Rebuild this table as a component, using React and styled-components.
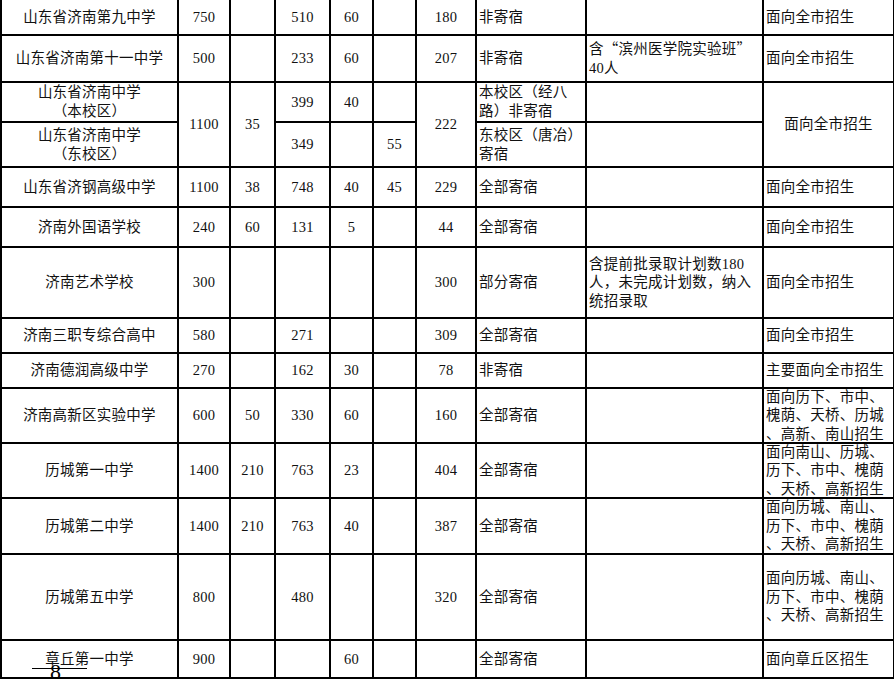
import React from 'react';
import styled, { createGlobalStyle } from 'styled-components';

const GlobalStyle = createGlobalStyle`
  html, body {
    margin: 0;
    padding: 0;
    background: #fff;
  }
`;

const Page = styled.div`
  position: relative;
  width: 894px;
  height: 679px;
  overflow: hidden;
  background: #fff;
`;

const Sheet = styled.table`
  border-collapse: collapse;
  table-layout: fixed;
  width: 893px;
  margin: -2px 0 0 0;
  font-family: "Liberation Serif", "Noto Sans CJK SC", serif;
  font-size: 14.5px;
  letter-spacing: 0.25px;
  color: #111;
`;

const Row = styled.tr`
  height: ${({ $h }) => $h}px;
`;

const Cell = styled.td`
  border: 2px solid #000;
  padding: 0 0 0 ${({ $align }) => ($align === 'left' ? '2px' : '0')};
  text-align: ${({ $align }) => $align || 'center'};
  vertical-align: middle;
  line-height: 18.6px;
  white-space: nowrap;
  overflow: visible;
`;

const Lines = styled.div`
  margin: ${({ $tight }) => ($tight ? '-3px 0' : '0')};
  & > span {
    display: block;
  }
`;

const Cjk = styled.span`
  font-family: "Noto Sans CJK SC", sans-serif;
`;

const Folio = styled.div`
  position: absolute;
  left: 32px;
  top: 668px;
  width: 55px;
  border-top: 1px solid #000;
`;

const FolioNum = styled.span`
  position: absolute;
  left: 18px;
  top: -8px;
  font-family: "Liberation Serif", serif;
  font-size: 22px;
  line-height: 22px;
  color: #000;
`;

const Text = ({ lines, tight }) => (
  <Lines $tight={tight}>
    {lines.map((l, i) => (
      <span key={i}>{l}</span>
    ))}
  </Lines>
);

const widths = [177, 52, 45, 55, 43, 43, 60, 110, 177, 131];

const simple = [
  { h: 36, name: '山东省济南第九中学', n: ['750', '', '510', '60', '', '180'], stay: '非寄宿', note: null, scope: ['面向全市招生'] },
  {
    h: 47, name: '山东省济南第十一中学', n: ['500', '', '233', '60', '', '207'], stay: '非寄宿',
    note: [<>含<Cjk>“</Cjk>滨州医学院实验班<Cjk>”</Cjk></>, '40人'], scope: ['面向全市招生'],
  },
];

const rest = [
  { h: 40, name: '山东省济钢高级中学', n: ['1100', '38', '748', '40', '45', '229'], stay: '全部寄宿', note: null, scope: ['面向全市招生'] },
  { h: 40, name: '济南外国语学校', n: ['240', '60', '131', '5', '', '44'], stay: '全部寄宿', note: null, scope: ['面向全市招生'] },
  {
    h: 71, name: '济南艺术学校', n: ['300', '', '', '', '', '300'], stay: '部分寄宿',
    note: ['含提前批录取计划数180', '人，未完成计划数，纳入', '统招录取'], scope: ['面向全市招生'],
  },
  { h: 35, name: '济南三职专综合高中', n: ['580', '', '271', '', '', '309'], stay: '全部寄宿', note: null, scope: ['面向全市招生'] },
  { h: 35, name: '济南德润高级中学', n: ['270', '', '162', '30', '', '78'], stay: '非寄宿', note: null, scope: ['主要面向全市招生'] },
  {
    h: 55, name: '济南高新区实验中学', n: ['600', '50', '330', '60', '', '160'], stay: '全部寄宿', note: null,
    scope: ['面向历下、市中、', '槐荫、天桥、历城', '、高新、南山招生'],
  },
  {
    h: 55, name: '历城第一中学', n: ['1400', '210', '763', '23', '', '404'], stay: '全部寄宿', note: null,
    scope: ['面向南山、历城、', '历下、市中、槐荫', '、天桥、高新招生'],
  },
  {
    h: 56, name: '历城第二中学', n: ['1400', '210', '763', '40', '', '387'], stay: '全部寄宿', note: null,
    scope: ['面向历城、南山、', '历下、市中、槐荫', '、天桥、高新招生'],
  },
  {
    h: 86, name: '历城第五中学', n: ['800', '', '480', '', '', '320'], stay: '全部寄宿', note: null,
    scope: ['面向历城、南山、', '历下、市中、槐荫', '、天桥、高新招生'],
  },
  { h: 38, name: '章丘第一中学', n: ['900', '', '', '60', '', ''], stay: '全部寄宿', note: null, scope: ['面向章丘区招生'] },
];

const SchoolRow = ({ r }) => (
  <Row $h={r.h}>
    <Cell>{r.name}</Cell>
    {r.n.map((v, i) => (
      <Cell key={i}>{v}</Cell>
    ))}
    <Cell $align="left">{r.stay}</Cell>
    <Cell $align="left">{r.note && <Text lines={r.note} />}</Cell>
    <Cell $align="left"><Text lines={r.scope} tight={r.scope.length > 2} /></Cell>
  </Row>
);

export default function App() {
  return (
    <Page>
      <GlobalStyle />
      <Sheet>
        <colgroup>
          {widths.map((w, i) => (
            <col key={i} style={{ width: w }} />
          ))}
        </colgroup>
        <tbody>
          {simple.map((r, i) => (
            <SchoolRow key={i} r={r} />
          ))}
          <Row $h={40}>
            <Cell><Text lines={['山东省济南中学', '（本校区）']} /></Cell>
            <Cell rowSpan={2}>1100</Cell>
            <Cell rowSpan={2}>35</Cell>
            <Cell>399</Cell>
            <Cell>40</Cell>
            <Cell></Cell>
            <Cell rowSpan={2}>222</Cell>
            <Cell $align="left"><Text lines={['本校区（经八', '路）非寄宿']} /></Cell>
            <Cell $align="left"></Cell>
            <Cell rowSpan={2}>面向全市招生</Cell>
          </Row>
          <Row $h={45}>
            <Cell><Text lines={['山东省济南中学', '（东校区）']} /></Cell>
            <Cell>349</Cell>
            <Cell></Cell>
            <Cell>55</Cell>
            <Cell $align="left"><Text lines={['东校区（唐冶）', '寄宿']} /></Cell>
            <Cell $align="left"></Cell>
          </Row>
          {rest.map((r, i) => (
            <SchoolRow key={i} r={r} />
          ))}
        </tbody>
      </Sheet>
      <Folio>
        <FolioNum>8</FolioNum>
      </Folio>
    </Page>
  );
}
